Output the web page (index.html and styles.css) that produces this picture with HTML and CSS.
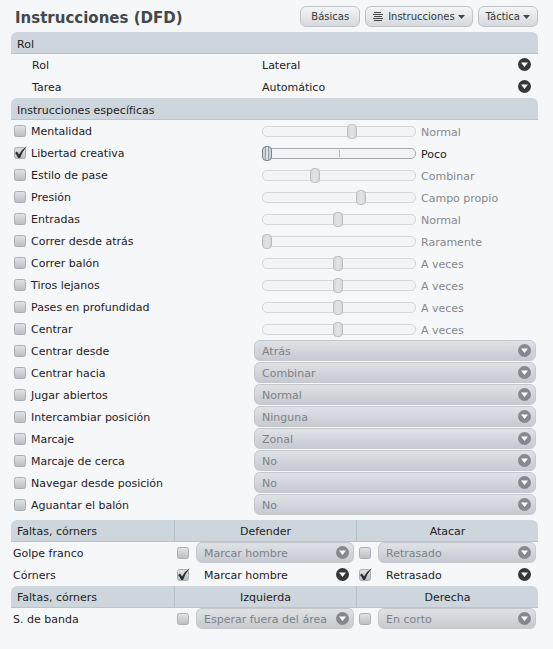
FILE: index.html
```html
<!DOCTYPE html>
<html lang="es">
<head>
  <meta charset="UTF-8">
  <title>Instrucciones (DFD)</title>
  <link rel="stylesheet" href="styles.css">
</head>
<body>
<main class="panel">
  <header class="top">
    <h1 class="title">Instrucciones (DFD)</h1>
    <div class="actions">
      <button type="button" class="button">Básicas</button>
      <button type="button" class="button">
        <svg class="lines" width="10" height="9" viewBox="0 0 10 9"><path d="M1 0.5h7M0 2.5h10M1 4.5h8M0 6.5h10M1 8.5h8" stroke="#3f4549" fill="none"/></svg>
        Instrucciones
        <svg width="7" height="4" viewBox="0 0 7 4"><path d="M0 0h7L3.5 4z" fill="#3f4549"/></svg>
      </button>
      <button type="button" class="button">
        Táctica
        <svg width="7" height="4" viewBox="0 0 7 4"><path d="M0 0h7L3.5 4z" fill="#3f4549"/></svg>
      </button>
    </div>
  </header>

  <section>
    <h2 class="bar">Rol</h2>
    <div class="row">
      <label class="name indent" for="rol">Rol</label>
      <select id="rol" class="drop"><option>Lateral</option></select>
    </div>
    <div class="row">
      <label class="name indent" for="tarea">Tarea</label>
      <select id="tarea" class="drop"><option>Automático</option></select>
    </div>
  </section>

  <section class="specific">
    <h2 class="bar">Instrucciones específicas</h2>
    <div class="row">
      <label class="name"><input type="checkbox" class="check">Mentalidad</label>
      <div class="slide"><input type="range" class="range" aria-label="Mentalidad" value="60" disabled><output>Normal</output></div>
    </div>
    <div class="row">
      <label class="name"><input type="checkbox" class="check" checked>Libertad creativa</label>
      <div class="slide"><input type="range" class="range" aria-label="Libertad creativa" value="0"><output>Poco</output></div>
    </div>
    <div class="row">
      <label class="name"><input type="checkbox" class="check">Estilo de pase</label>
      <div class="slide"><input type="range" class="range" aria-label="Estilo de pase" value="34" disabled><output>Combinar</output></div>
    </div>
    <div class="row">
      <label class="name"><input type="checkbox" class="check">Presión</label>
      <div class="slide"><input type="range" class="range" aria-label="Presión" value="66" disabled><output>Campo propio</output></div>
    </div>
    <div class="row">
      <label class="name"><input type="checkbox" class="check">Entradas</label>
      <div class="slide"><input type="range" class="range" aria-label="Entradas" value="50" disabled><output>Normal</output></div>
    </div>
    <div class="row">
      <label class="name"><input type="checkbox" class="check">Correr desde atrás</label>
      <div class="slide"><input type="range" class="range" aria-label="Correr desde atrás" value="0" disabled><output>Raramente</output></div>
    </div>
    <div class="row">
      <label class="name"><input type="checkbox" class="check">Correr balón</label>
      <div class="slide"><input type="range" class="range" aria-label="Correr balón" value="50" disabled><output>A veces</output></div>
    </div>
    <div class="row">
      <label class="name"><input type="checkbox" class="check">Tiros lejanos</label>
      <div class="slide"><input type="range" class="range" aria-label="Tiros lejanos" value="50" disabled><output>A veces</output></div>
    </div>
    <div class="row">
      <label class="name"><input type="checkbox" class="check">Pases en profundidad</label>
      <div class="slide"><input type="range" class="range" aria-label="Pases en profundidad" value="50" disabled><output>A veces</output></div>
    </div>
    <div class="row">
      <label class="name"><input type="checkbox" class="check">Centrar</label>
      <div class="slide"><input type="range" class="range" aria-label="Centrar" value="50" disabled><output>A veces</output></div>
    </div>
    <div class="row">
      <label class="name"><input type="checkbox" class="check">Centrar desde</label>
      <select class="drop" aria-label="Centrar desde" disabled><option>Atrás</option></select>
    </div>
    <div class="row">
      <label class="name"><input type="checkbox" class="check">Centrar hacia</label>
      <select class="drop" aria-label="Centrar hacia" disabled><option>Combinar</option></select>
    </div>
    <div class="row">
      <label class="name"><input type="checkbox" class="check">Jugar abiertos</label>
      <select class="drop" aria-label="Jugar abiertos" disabled><option>Normal</option></select>
    </div>
    <div class="row">
      <label class="name"><input type="checkbox" class="check">Intercambiar posición</label>
      <select class="drop" aria-label="Intercambiar posición" disabled><option>Ninguna</option></select>
    </div>
    <div class="row">
      <label class="name"><input type="checkbox" class="check">Marcaje</label>
      <select class="drop" aria-label="Marcaje" disabled><option>Zonal</option></select>
    </div>
    <div class="row">
      <label class="name"><input type="checkbox" class="check">Marcaje de cerca</label>
      <select class="drop" aria-label="Marcaje de cerca" disabled><option>No</option></select>
    </div>
    <div class="row">
      <label class="name"><input type="checkbox" class="check">Navegar desde posición</label>
      <select class="drop" aria-label="Navegar desde posición" disabled><option>No</option></select>
    </div>
    <div class="row">
      <label class="name"><input type="checkbox" class="check">Aguantar el balón</label>
      <select class="drop" aria-label="Aguantar el balón" disabled><option>No</option></select>
    </div>
  </section>

  <table class="set">
    <thead>
      <tr><th>Faltas, córners</th><th>Defender</th><th>Atacar</th></tr>
    </thead>
    <tbody>
      <tr>
        <td>Golpe franco</td>
        <td><div class="pick"><input type="checkbox" class="check" aria-label="Golpe franco, defender"><select class="drop" aria-label="Golpe franco, defender" disabled><option>Marcar hombre</option></select></div></td>
        <td><div class="pick"><input type="checkbox" class="check" aria-label="Golpe franco, atacar"><select class="drop" aria-label="Golpe franco, atacar" disabled><option>Retrasado</option></select></div></td>
      </tr>
      <tr>
        <td>Córners</td>
        <td><div class="pick"><input type="checkbox" class="check" aria-label="Córners, defender" checked><select class="drop" aria-label="Córners, defender"><option>Marcar hombre</option></select></div></td>
        <td><div class="pick"><input type="checkbox" class="check" aria-label="Córners, atacar" checked><select class="drop" aria-label="Córners, atacar"><option>Retrasado</option></select></div></td>
      </tr>
    </tbody>
  </table>
  <table class="set">
    <thead>
      <tr><th>Faltas, córners</th><th>Izquierda</th><th>Derecha</th></tr>
    </thead>
    <tbody>
      <tr>
        <td>S. de banda</td>
        <td><div class="pick"><input type="checkbox" class="check" aria-label="S. de banda, izquierda"><select class="drop" aria-label="S. de banda, izquierda" disabled><option>Esperar fuera del área</option></select></div></td>
        <td><div class="pick"><input type="checkbox" class="check" aria-label="S. de banda, derecha"><select class="drop" aria-label="S. de banda, derecha" disabled><option>En corto</option></select></div></td>
      </tr>
    </tbody>
  </table>
</main>
</body>
</html>
```
FILE: styles.css
```css
* {
  box-sizing: border-box;
}
body {
  margin: 0;
  background: #f5f7f9;
  color: #1f2123;
  font: 11px/22px "DejaVu Sans", sans-serif;
}
.panel {
  padding: 0 15px 16px 11px;
}

/* title and buttons */
.top {
  display: flex;
  justify-content: space-between;
  align-items: center;
  height: 32px;
  padding-top: 1px;
}
.title {
  margin: 0;
  padding: 2px 0 0 4px;
  font-size: 15px;
  font-weight: bold;
  color: #42484c;
}
.actions {
  display: flex;
  gap: 5px;
}
.button {
  display: flex;
  align-items: center;
  gap: 3px;
  height: 21px;
  padding: 0 7px;
  border: 1px solid #bfc3c6;
  border-radius: 6px;
  background: linear-gradient(#f4f5f6, #d6d9dd);
  color: #33383b;
  font: 10px "DejaVu Sans", sans-serif;
  cursor: pointer;
}
.button:first-child {
  padding: 0 10px;
}
.lines {
  margin-right: 2px;
}

.bar {
  height: 22px;
  margin: 0;
  padding: 2px 6px 0;
  border-bottom: 1px solid #b8c4ca;
  border-radius: 6px 6px 0 0;
  background: #ccd6dc;
  font-size: 11px;
  font-weight: normal;
}
.row {
  display: grid;
  grid-template-columns: 243px 1fr;
  align-items: center;
  height: 22px;
  padding-right: 2px;
}
.name {
  display: flex;
  align-items: center;
  gap: 4px;
  padding: 2px 0 0 2px;
  line-height: 20px;
}
.name .check {
  margin-bottom: 2px;
}
.indent {
  padding-left: 21px;
}
.specific {
  margin-bottom: 4px;
}

.check {
  appearance: none;
  flex: none;
  width: 14px;
  height: 14px;
  margin: 0;
  background: url("data:image/svg+xml,%3Csvg xmlns='http://www.w3.org/2000/svg' width='14' height='14'%3E%3ClinearGradient id='g' x2='0' y2='1'%3E%3Cstop stop-color='%23e2e5e7'/%3E%3Cstop offset='1' stop-color='%23b9bfc4'/%3E%3C/linearGradient%3E%3Crect x='1.5' y='1.5' width='11' height='11' rx='2' fill='url(%23g)' stroke='%23a9afb3'/%3E%3C/svg%3E");
}
.check:checked {
  background: url("data:image/svg+xml,%3Csvg xmlns='http://www.w3.org/2000/svg' width='14' height='14'%3E%3ClinearGradient id='g' x2='0' y2='1'%3E%3Cstop stop-color='%23e2e5e7'/%3E%3Cstop offset='1' stop-color='%23b9bfc4'/%3E%3C/linearGradient%3E%3Crect x='1.5' y='1.5' width='11' height='11' rx='2' fill='url(%23g)' stroke='%23a9afb3'/%3E%3Cpath d='M2 7L4 5.500l2 3Q9 3 14 0Q9.500 5 7 12H5.200Q4 9 2 7z' fill='%232b2e30'/%3E%3C/svg%3E");
}

/* sliders */
.slide {
  display: flex;
  align-items: center;
  gap: 5px;
  padding-left: 8px;
}
.slide output {
  padding-top: 4px;
  line-height: 18px;
}
.range {
  appearance: none;
  width: 154px;
  height: 15px;
  margin: 0;
  background: none;
}
.range::-webkit-slider-runnable-track {
  height: 11px;
  border: 1px solid #a4a9ad;
  border-radius: 5px;
  background: linear-gradient(#b4b8bb, #b4b8bb) 76px 1px / 1px 7px no-repeat, #f1f3f4;
}
.range::-webkit-slider-thumb {
  appearance: none;
  width: 10px;
  height: 15px;
  margin: -3px -1px;
  border: 1px solid #80878c;
  border-radius: 4px;
  background: linear-gradient(90deg, #cbd0d3 2px, #92999e 2px, #92999e 3px, #e3e6e8 3px, #e3e6e8 5px, #92999e 5px, #92999e 6px, #cbd0d3 6px);
}
.range:disabled::-webkit-slider-runnable-track {
  border-color: #d4d6d8;
  background: #f3f4f5;
}
.range:disabled::-webkit-slider-thumb {
  border-color: #bcbec0;
  background: linear-gradient(90deg, #d6d7d8, #e4e5e6 50%, #d6d7d8);
}
.range:disabled + output {
  color: #85888b;
}

/* drop-downs */
.drop {
  appearance: none;
  align-self: start;
  width: 100%;
  min-width: 0;
  height: 21px;
  padding: 2px 24px 0 7px;
  border: 1px solid transparent;
  border-radius: 6px;
  background: url("data:image/svg+xml,%3Csvg xmlns='http://www.w3.org/2000/svg' width='13' height='13'%3E%3Ccircle cx='6.500' cy='6.500' r='6.500' fill='%23353739'/%3E%3Cpath d='M3 4.500h7L6.500 9z' fill='%23fff'/%3E%3C/svg%3E") right 4px center no-repeat;
  color: inherit;
  font: inherit;
  line-height: 17px;
}
.drop:disabled {
  border-color: #c4c8cc;
  background: url("data:image/svg+xml,%3Csvg xmlns='http://www.w3.org/2000/svg' width='13' height='13'%3E%3Ccircle cx='6.500' cy='6.500' r='6.500' fill='%2385898d'/%3E%3Cpath d='M3 4.500h7L6.500 9z' fill='%23fff'/%3E%3C/svg%3E") right 4px center no-repeat, linear-gradient(#dfe2e5, #c6cad1);
  color: #7d8185;
  opacity: 1;
}

/* set pieces */
.set {
  width: 100%;
  table-layout: fixed;
  border-spacing: 0;
}
.set th {
  height: 22px;
  padding: 2px 0 0;
  border-bottom: 1px solid #b8c4ca;
  background: #ccd6dc;
  font-weight: normal;
  line-height: 19px;
}
.set th:first-child {
  width: 163px;
  padding-left: 6px;
  border-radius: 6px 0 0 0;
  text-align: left;
}
.set th:last-child {
  border-radius: 0 6px 0 0;
}
.set th + th {
  border-left: 1px solid #b5c1c8;
}
.set td {
  height: 22px;
  padding: 0 2px;
}
.set td:first-child {
  padding-top: 2px;
  line-height: 20px;
}
.pick {
  display: flex;
  align-items: center;
  height: 22px;
  gap: 6px;
}
```
